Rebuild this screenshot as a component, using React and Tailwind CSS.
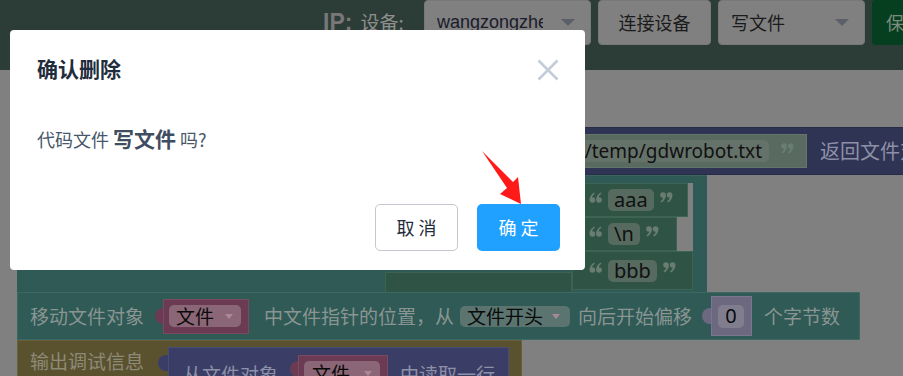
const cjk = "font-['Noto_Sans_CJK_SC','Microsoft_YaHei',sans-serif]";

function Caret() {
  return <div className="w-0 h-0 border-x-[7px] border-x-transparent border-t-[7px] border-t-[#5b5f6a]" />;
}

function SmallCaret() {
  return <div className="w-0 h-0 border-x-[4px] border-x-transparent border-t-[5px] border-t-[#a8899a]" />;
}

function Header() {
  return (
    <div className={`h-[70px] bg-[#2c3d37] flex items-start ${cjk}`}>
      <div className="w-[424px] shrink-0 h-[45px] flex items-center pl-[323px]">
        <span className="text-[23px] font-bold text-[#777] font-['Liberation_Sans',sans-serif]">IP:</span>
        <span className="ml-[8px] text-[19px] text-[#8f8f8f]">设备:</span>
      </div>
      <div className="h-[45px] w-[167px] shrink-0 rounded-[4px] bg-[#808080] border border-[#787878] flex items-center pl-[12px] pr-[15px]">
        <div className="w-[106px] overflow-hidden whitespace-nowrap text-[18px] text-[#1b1b2b] font-['Liberation_Sans',sans-serif]">
          wangzongzhe
        </div>
        <div className="ml-auto">
          <Caret />
        </div>
      </div>
      <div className="ml-[7px] h-[45px] w-[113px] shrink-0 rounded-[4px] bg-[#808080] border border-[#787878] flex items-center justify-center text-[18px] text-[#1b1b1b]">
        连接设备
      </div>
      <div className="ml-[7px] h-[45px] w-[147px] shrink-0 rounded-[4px] bg-[#808080] border border-[#787878] flex items-center pl-[12px] pr-[15px] text-[18px] text-[#1b1b1b]">
        写文件
        <div className="ml-auto">
          <Caret />
        </div>
      </div>
      <div className="ml-[7px] h-[45px] w-[90px] shrink-0 rounded-l-[4px] bg-[#053f1f] flex items-center pl-[14px] text-[18px] text-[#7c8d80] whitespace-nowrap">
        保存
      </div>
    </div>
  );
}

function Quote({ open }) {
  return (
    <svg width="13" height="11" viewBox="0 0 13 11" className={open ? "rotate-180 -mt-[6px]" : "-mt-[6px]"}>
      <g fill="#6a7d73">
        <circle cx="3" cy="3" r="2.8" />
        <path d="M5.8 3 Q5.9 8 1.2 10.6 L0.6 9.6 Q3.4 7.6 3.2 5 Z" />
        <circle cx="9.6" cy="3" r="2.8" />
        <path d="M12.4 3 Q12.5 8 7.8 10.6 L7.2 9.6 Q10 7.6 9.8 5 Z" />
      </g>
    </svg>
  );
}

function TextField({ children }) {
  return (
    <div className="h-[22px] rounded-[5px] bg-[#566a5f] px-[6px] flex items-center text-[20px] text-[#111] font-['Noto_Sans',sans-serif]">
      {children}
    </div>
  );
}

function Workspace() {
  return (
    <>
      {/* block: 打开文件 ... 返回文件对象 */}
      <div className={`absolute left-[420px] top-[127px] w-[520px] h-[48px] bg-[#2f3354] border-y border-[#282c4a] flex items-center ${cjk}`}>
        <div className="ml-[10px] w-[377px] shrink-0 h-[34px] bg-[#596b60] border border-[#64766b] flex items-center justify-end">
          <div className="h-[22px] rounded-[5px] bg-[#65726a] flex items-center px-[7px] text-[19px] text-[#111] font-['Noto_Sans',sans-serif] whitespace-nowrap">
            /home/pi/temp/gdwrobot.txt
          </div>
          <div className="w-[37px] flex justify-center">
            <Quote />
          </div>
        </div>
        <span className="ml-[13px] text-[20px] text-[#8d90a6] whitespace-nowrap">返回文件对象</span>
      </div>

      {/* container with stacked text blocks */}
      <div className="absolute left-[17px] top-[175px] w-[690px] h-[117px] bg-[#2f5a55] border-t border-[#3b665f]">
        <div className="absolute left-[368px] top-[96px] w-[187px] h-[21px] bg-[#2f5446] border border-[#3d6353]" />
        <div className={`absolute left-[555px] top-[7px] w-[121px] h-[107px] bg-[#808080] flex flex-col ${cjk}`}>
          <div className="w-[116px] h-[34px] bg-[#2f5446] border border-[#3d6353] flex items-center pl-[16px] gap-[6px]">
            <Quote open />
            <TextField>aaa</TextField>
            <Quote />
          </div>
          <div className="w-[105px] h-[34px] bg-[#2f5446] border border-[#3d6353] flex items-center pl-[16px] gap-[6px]">
            <Quote open />
            <TextField>\n</TextField>
            <Quote />
          </div>
          <div className="w-[121px] h-[39px] bg-[#2f5446] border border-[#3d6353] flex items-center pl-[16px] gap-[6px]">
            <Quote open />
            <TextField>bbb</TextField>
            <Quote />
          </div>
        </div>
      </div>

      {/* 移动文件对象 block */}
      <div className={`absolute left-[17px] top-[292px] w-[843px] h-[48px] bg-[#2f5a55] border border-[#3d6862] flex items-center text-[19px] text-[#8a9593] whitespace-nowrap ${cjk}`}>
        <span className="ml-[12px]">移动文件对象</span>
        <div className="ml-[11px] flex items-center">
          <div className="w-[8px] h-[16px] rounded-l-full bg-[#6a3b53]" />
          <div className="w-[86px] h-[35px] bg-[#6a3b53] border border-[#7a4a62] flex items-center pl-[5px]">
            <div className="w-[72px] h-[22px] rounded-[5px] bg-[#8b6676] flex items-center pl-[7px] pr-[8px] text-[#0a0a0a]">
              文件
              <div className="ml-auto">
                <SmallCaret />
              </div>
            </div>
          </div>
        </div>
        <span className="ml-[15px]">中文件指针的位置，从</span>
        <div className="ml-[6px] w-[110px] h-[21px] rounded-[5px] bg-[#5b7470] flex items-center pl-[7px] pr-[10px] text-[#0a0a0a]">
          文件开头
          <div className="ml-auto">
            <SmallCaret />
          </div>
        </div>
        <span className="ml-[8px]">向后开始偏移</span>
        <div className="ml-[10px] flex items-center">
          <div className="w-[9px] h-[16px] rounded-l-full bg-[#6c6880]" />
          <div className="w-[41px] h-[40px] bg-[#6c6880] border border-[#7a7690] flex items-center pl-[6px]">
            <div className="w-[26px] h-[23px] rounded-[5px] bg-[#807e8e] flex items-center justify-center text-[20px] text-[#0a0a0a] font-['Noto_Sans',sans-serif]">
              0
            </div>
          </div>
        </div>
        <span className="ml-[12px]">个字节数</span>
      </div>

      {/* 输出调试信息 block */}
      <div className={`absolute left-[17px] top-[340px] w-[505px] h-[60px] bg-[#5a522f] border border-[#686039] text-[19px] whitespace-nowrap ${cjk}`}>
        <span className="absolute left-[12px] top-[6px] text-[#8e8a78]">输出调试信息</span>
        <div className="absolute left-[140px] top-[6px] flex items-start">
          <div className="mt-[8px] w-[10px] h-[16px] rounded-l-full bg-[#3a3e66]" />
          <div className="w-[341px] h-[50px] bg-[#3a3e66] border border-[#484c78] flex items-start text-[#8d90a6]">
            <span className="ml-[14px] mt-[12px]">从文件对象</span>
            <div className="ml-[12px] mt-[7px] flex items-start">
              <div className="mt-[6px] w-[8px] h-[16px] rounded-l-full bg-[#6a3b53]" />
              <div className="w-[90px] h-[40px] bg-[#6a3b53] border border-[#7a4a62] flex items-start pl-[5px] pt-[5px]">
                <div className="w-[76px] h-[24px] rounded-[5px] bg-[#8b6676] flex items-center pl-[8px] pr-[8px] text-[#0a0a0a]">
                  文件
                  <div className="ml-auto">
                    <SmallCaret />
                  </div>
                </div>
              </div>
            </div>
            <span className="ml-[12px] mt-[12px]">中读取一行</span>
          </div>
        </div>
      </div>
    </>
  );
}

function ConfirmDialog() {
  return (
    <div className={`absolute left-[10px] top-[30px] w-[575px] h-[240px] bg-white rounded-[4px] ${cjk}`}>
      <div className="flex items-start pt-[26px] pl-[27px] pr-[26px]">
        <h3 className="text-[21px] leading-[24px] font-bold text-[#1f2d3d]">确认删除</h3>
        <button className="ml-auto mt-[3px]">
          <svg width="22" height="22" viewBox="0 0 22 22">
            <path d="M1.5 1.5 L20.5 20.5 M20.5 1.5 L1.5 20.5" stroke="#c3cdda" strokeWidth="2.6" fill="none" />
          </svg>
        </button>
      </div>
      <p className="mt-[45px] pl-[27px] text-[18px] leading-[24px] text-[#48576a]">
        代码文件 <b className="text-[21px] font-bold text-[#3f4d60]">写文件</b> 吗?
      </p>
      <div className="mt-[53px] flex justify-end gap-[19px] pr-[25px]">
        <button className="w-[83px] h-[47px] rounded-[5px] border border-[#c4c8d0] bg-white text-[18px] text-[#1f2d3d]">
          取 消
        </button>
        <button className="w-[83px] h-[47px] rounded-[5px] bg-[#20a0ff] text-[18px] text-white">
          确 定
        </button>
      </div>
    </div>
  );
}

function RedArrow() {
  return (
    <svg className="absolute left-[478px] top-[146px]" width="50" height="64" viewBox="478 146 50 64">
      <polygon
        points="482,151 513,182 518,177 521,204 500,194 507,188"
        fill="#ff1a1a"
      />
    </svg>
  );
}

export default function App() {
  return (
    <div className="relative w-[903px] h-[376px] overflow-hidden bg-[#808080]">
      <Header />
      <Workspace />
      <ConfirmDialog />
      <RedArrow />
    </div>
  );
}
